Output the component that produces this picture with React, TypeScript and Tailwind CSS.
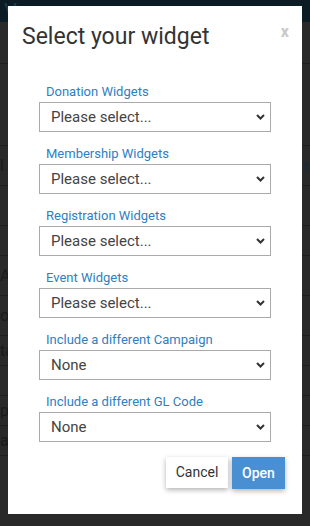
import React, { useState } from "react";

const fields = [
  { label: "Donation Widgets", value: "Please select..." },
  { label: "Membership Widgets", value: "Please select..." },
  { label: "Registration Widgets", value: "Please select..." },
  { label: "Event Widgets", value: "Please select..." },
  { label: "Include a different Campaign", value: "None" },
  { label: "Include a different GL Code", value: "None" },
];

const bgRows = [
  { h: "h-[42px]", left: "", right: "" },
  { h: "h-[82px]", left: "", right: "" },
  { h: "h-[40px]", left: "l F", right: "is" },
  { h: "h-[40px]", left: "", right: "" },
  { h: "h-[30px]", left: "", right: "" },
  { h: "h-[40px]", left: "A", right: "" },
  { h: "h-[40px]", left: "or", right: "" },
  { h: "h-[30px]", left: "ta", right: "" },
  { h: "h-[30px]", left: "", right: "" },
  { h: "h-[30px]", left: "p", right: "" },
  { h: "h-[30px]", left: "a", right: "" },
];

const Chevron = () => (
  <svg width="9" height="6" viewBox="0 0 9 6" className="shrink-0">
    <path d="M1 1l3.5 3.5L8 1" fill="none" stroke="#333" strokeWidth="2" />
  </svg>
);

const App: React.FC = () => {
  const [values] = useState(fields.map((f) => f.value));

  return (
    <div className="relative w-[310px] h-[526px] overflow-hidden bg-[#292929] font-['Roboto','Liberation_Sans',sans-serif]">
      {/* dimmed page behind the modal */}
      <div className="flex flex-col">
        <div className="h-[22px] bg-[#0c1c24] flex items-center px-1 gap-10">
          <span className="text-[#1f3a44] text-[20px]">Vena</span>
          <span className="text-[#1f3a44] text-[14px]">♥♥</span>
        </div>
        {bgRows.map((row, i) => (
          <div
            key={i}
            className={`${row.h} border-b border-[#1e1e1e] flex items-center justify-between text-[#1a1a1a] text-[16px]`}
          >
            <span>{row.left}</span>
            <span className="text-[#1b2a38]">{row.right}</span>
          </div>
        ))}
      </div>

      {/* modal */}
      <div className="absolute left-[8px] top-[6px] w-[294px] h-[508px] bg-white flex flex-col">
        <div className="flex justify-between items-start pl-[14px] pr-[13px] pt-[17px]">
          <h2 className="text-[23px] leading-[28px] text-[#333]">Select your widget</h2>
          <span className="text-[#c8c8c8] font-bold text-[16px] leading-[16px] mt-[1px]">x</span>
        </div>

        <div className="flex flex-col px-[31px] mt-[31px]">
          {fields.map((f, i) => (
            <div key={f.label} className="flex flex-col mb-[12px]">
              <label className="pl-[7px] h-[20px] text-[13px] leading-[20px] text-[#2d80c4]">{f.label}</label>
              <div className="h-[30px] border border-[#aaa] flex items-center justify-between pl-[11px] pr-[5px]">
                <span className="text-[15px] text-[#444]">{values[i]}</span>
                <Chevron />
              </div>
            </div>
          ))}
        </div>

        <div className="flex justify-end gap-[4px] pr-[17px] mt-[3px]">
          <button className="w-[62px] h-[31px] bg-white text-[#333] text-[14px] shadow-[0_2px_5px_rgba(0,0,0,0.3)]">
            Cancel
          </button>
          <button className="w-[53px] h-[32px] bg-[#4a8fd2] text-white font-medium text-[14px] shadow-[0_2px_5px_rgba(0,0,0,0.3)]">
            Open
          </button>
        </div>
      </div>
    </div>
  );
};

export default App;
